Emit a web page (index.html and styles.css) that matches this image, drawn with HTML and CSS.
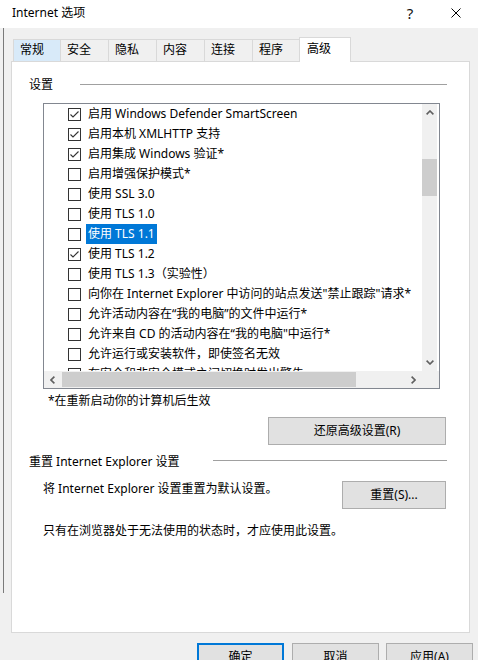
FILE: index.html
```html
<!DOCTYPE html>
<html lang="zh-CN">
<head>
<meta charset="utf-8">
<title>Internet 选项</title>
<link rel="stylesheet" href="styles.css">
</head>
<body>
<div class="titlebar">
  <span class="title">Internet 选项</span>
  <span class="help">?</span>
  <svg class="close" width="10" height="10" viewBox="0 0 10 10"><path d="M0.5 0.5 L9.5 9.5 M9.5 0.5 L0.5 9.5" stroke="#000" stroke-width="1" fill="none"/></svg>
</div>
<div class="frame">
  <div class="tabs">
    <div class="tab hover first">常规</div>
    <div class="tab">安全</div>
    <div class="tab">隐私</div>
    <div class="tab">内容</div>
    <div class="tab">连接</div>
    <div class="tab narrow">程序</div>
    <div class="tab active">高级</div>
  </div>
  <div class="panel">
    <div class="group-head"><span>设置</span><span class="rule r1"></span></div>
    <div class="listbox">
      <div class="lb-main">
        <div class="items">
          <div class="row"><span class="cb"><svg viewBox="0 0 11 11"><path d="M1.5 5.5 L4 8 L9.5 2.5" /></svg></span><span class="label">启用 Windows Defender SmartScreen</span></div>
          <div class="row"><span class="cb"><svg viewBox="0 0 11 11"><path d="M1.5 5.5 L4 8 L9.5 2.5" /></svg></span><span class="label">启用本机 XMLHTTP 支持</span></div>
          <div class="row"><span class="cb"><svg viewBox="0 0 11 11"><path d="M1.5 5.5 L4 8 L9.5 2.5" /></svg></span><span class="label">启用集成 Windows 验证*</span></div>
          <div class="row"><span class="cb"></span><span class="label">启用增强保护模式*</span></div>
          <div class="row"><span class="cb"></span><span class="label">使用 SSL 3.0</span></div>
          <div class="row"><span class="cb"></span><span class="label">使用 TLS 1.0</span></div>
          <div class="row"><span class="cb"></span><span class="label sel">使用 TLS 1.1</span></div>
          <div class="row"><span class="cb"><svg viewBox="0 0 11 11"><path d="M1.5 5.5 L4 8 L9.5 2.5" /></svg></span><span class="label">使用 TLS 1.2</span></div>
          <div class="row"><span class="cb"></span><span class="label">使用 TLS 1.3（实验性）</span></div>
          <div class="row"><span class="cb"></span><span class="label">向你在 Internet Explorer 中访问的站点发送"禁止跟踪"请求*</span></div>
          <div class="row"><span class="cb"></span><span class="label">允许活动内容在“我的电脑”的文件中运行*</span></div>
          <div class="row"><span class="cb"></span><span class="label">允许来自 CD 的活动内容在“我的电脑"中运行*</span></div>
          <div class="row"><span class="cb"></span><span class="label">允许运行或安装软件，即使签名无效</span></div>
          <div class="row"><span class="cb"></span><span class="label">在安全和非安全模式之间切换时发出警告</span></div>
        </div>
        <div class="vscroll">
          <span class="sbtn"><svg width="8" height="5" viewBox="0 0 8 5"><path d="M0.6 4.4 L4 1 L7.4 4.4" class="arr"/></svg></span>
          <span class="vtrack"><span class="vthumb"></span></span>
          <span class="sbtn"><svg width="8" height="5" viewBox="0 0 8 5"><path d="M0.6 0.6 L4 4 L7.4 0.6" class="arr"/></svg></span>
        </div>
      </div>
      <div class="hscroll">
        <span class="sbtn h"><svg width="5" height="8" viewBox="0 0 5 8"><path d="M4.4 0.6 L1 4 L4.4 7.4" class="arr"/></svg></span>
        <span class="htrack"><span class="hthumb"></span></span>
        <span class="sbtn h"><svg width="5" height="8" viewBox="0 0 5 8"><path d="M0.6 0.6 L4 4 L0.6 7.4" class="arr"/></svg></span>
        <span class="corner"></span>
      </div>
    </div>
    <div class="note">*在重新启动你的计算机后生效</div>
    <div class="btn-row"><button class="btn restore">还原高级设置(R)</button></div>
    <div class="group-head g2"><span>重置 Internet Explorer 设置</span><span class="rule r2"></span></div>
    <div class="reset-row"><span>将 Internet Explorer 设置重置为默认设置。</span><button class="btn reset">重置(S)...</button></div>
    <div class="warn">只有在浏览器处于无法使用的状态时，才应使用此设置。</div>
  </div>
  <div class="footer">
    <button class="btn fbtn ok">确定</button>
    <button class="btn fbtn">取消</button>
    <button class="btn fbtn apply">应用(A)</button>
  </div>
</div>
</body>
</html>
```
FILE: styles.css
```css
* { box-sizing: border-box; }
html, body { margin: 0; padding: 0; }
body {
  width: 478px;
  height: 660px;
  overflow: hidden;
  background: linear-gradient(#7a7a7a, #7a7a7a) 3px 28px / 1px 565px no-repeat, #f0f0f0;
  font-family: "Noto Sans", "Noto Sans CJK SC", sans-serif;
  font-size: 12px;
  line-height: 16px;
  color: #000;
}
.titlebar {
  height: 28px;
  background: #fff;
  display: flex;
  align-items: center;
  padding-left: 12px;
}
.title { flex: 1; padding-bottom: 2px; }
.help {
  width: 14px;
  text-align: center;
  font-size: 15px;
  margin-right: 34px;
  padding-bottom: 2px;
  color: #111;
}
.close { margin-right: 17px; margin-bottom: 2px; }

.frame { padding-left: 11px; }

.tabs {
  display: flex;
  align-items: flex-end;
  margin-top: 9px;
  padding-left: 2px;
  height: 24px;
}
.tab {
  width: 48px;
  height: 22px;
  border: 1px solid #d9d9d9;
  border-bottom: none;
  border-right: none;
  padding-left: 6px;
  line-height: 20px;
}
.tab.first, .tab.narrow { width: 47px; }
.tab.hover { background: #d8eaf9; }
.tab.active {
  width: 52px;
  height: 25px;
  margin-bottom: -1px;
  background: #fff;
  border-right: 1px solid #d9d9d9;
  padding-left: 7px;
  line-height: 21px;
  position: relative;
  z-index: 1;
}

.panel {
  width: 459px;
  height: 572px;
  background: #fff;
  border: 1px solid #d9d9d9;
  padding-top: 15px;
}
.group-head {
  display: flex;
  align-items: center;
  height: 16px;
  margin-left: 17px;
  margin-right: 22px;
  white-space: nowrap;
}
.rule {
  flex: 1;
  border-top: 1px solid #a0a0a0;
  margin-bottom: 2px;
}
.r1 { margin-left: 27px; }
.r2 { margin-left: 33px; margin-bottom: 4px; }
.g2 { margin-top: 9px; }

.listbox {
  margin: 10px 0 0 31px;
  width: 397px;
  height: 286px;
  border: 1px solid #828790;
  display: flex;
  flex-direction: column;
}
.lb-main { height: 267px; display: flex; }
.items { flex: 1; overflow: hidden; }
.row {
  height: 20px;
  display: flex;
  align-items: center;
  padding-left: 24px;
  white-space: nowrap;
}
.cb {
  flex: none;
  width: 13px;
  height: 13px;
  border: 1px solid #333;
  background: #fff;
  margin-right: 5px;
  display: flex;
}
.cb svg { width: 11px; height: 11px; }
.cb path { fill: none; stroke: #333; stroke-width: 1.1; }
.label { line-height: 20px; padding: 0 2px; }
.label.sel { background: #0078d7; color: #fff; }

.vscroll {
  width: 15px;
  margin-right: 2px;
  background: #f0f0f0;
  display: flex;
  flex-direction: column;
}
.sbtn {
  flex: none;
  width: 15px;
  height: 17px;
  display: flex;
  align-items: center;
  justify-content: center;
}
.sbtn.h { width: 17px; }
.arr { fill: none; stroke: #606060; stroke-width: 1.6; }
.vtrack { flex: 1; padding-top: 38px; }
.vthumb { display: block; height: 37px; background: #cdcdcd; }

.hscroll {
  height: 17px;
  display: flex;
  background: #f0f0f0;
}
.htrack { flex: 1; padding: 1px 0 1px 1px; }
.hthumb { display: block; width: 294px; height: 15px; background: #cdcdcd; }
.corner { width: 17px; }

.note { margin: 4px 0 0 36px; }
.btn-row {
  display: flex;
  justify-content: flex-end;
  margin: 8px 23px 0 0;
}
.btn {
  height: 28px;
  background: #e1e1e1;
  border: 1px solid #adadad;
  font: inherit;
  color: #000;
  padding: 0;
  margin: 0;
}
.restore { width: 178px; }
.reset-row {
  display: flex;
  justify-content: space-between;
  align-items: flex-start;
  margin: 11px 23px 0 31px;
}
.reset { width: 104px; }
.warn { margin: 14px 0 0 31px; }

.footer {
  display: flex;
  justify-content: flex-end;
  gap: 8px;
  margin-top: 10px;
  padding-right: 5px;
}
.fbtn { width: 87px; }
.ok { border: 2px solid #0078d7; }
.apply { margin-left: -1px; }
```
